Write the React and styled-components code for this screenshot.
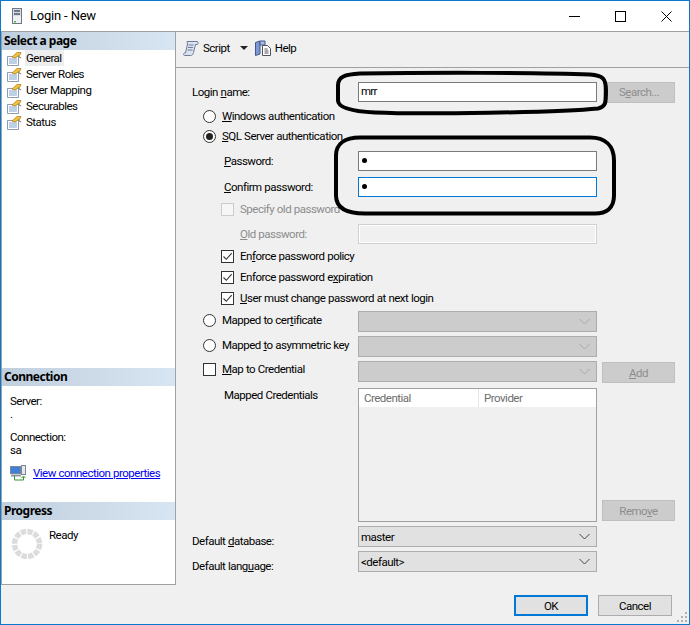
import React from "react";
import styled, { createGlobalStyle } from "styled-components";

const Global = createGlobalStyle`
  html, body { margin: 0; padding: 0; background: #fff; }
  * { box-sizing: border-box; }
`;

const Win = styled.div`
  width: 690px; height: 625px; border: 1px solid #0b78d0; background: #f0f0f0;
  display: flex; flex-direction: column; overflow: hidden;
  font: 11.5px/16px Roboto, "Noto Sans", sans-serif; color: #000;
  letter-spacing: -0.5px; white-space: nowrap;
  word-spacing: 0.3px;
  u { text-underline-offset: 1px; text-decoration-thickness: 1px; }
`;
const TitleBar = styled.header`
  height: 31px; flex: none; background: #fff; display: flex; align-items: center;
  padding-left: 11px; border-bottom: 1px solid #a0a0a0;
`;
const TitleText = styled.span`
  margin-left: 8px; font-size: 13px; letter-spacing: -0.25px; flex: 1;
`;
const WinButton = styled.div`
  width: 46px; height: 30px; display: flex; align-items: center; justify-content: center;
`;
const Body = styled.div`flex: 1; min-height: 0; display: flex;`;
const Sidebar = styled.aside`
  width: 175px; flex: none; background: #fff; display: flex; flex-direction: column;
  border-left: 1px solid #a0a0a0; border-right: 1px solid #a0a0a0; border-bottom: 1px solid #a0a0a0;
`;
const SideHeader = styled.h2`
  margin: 0; height: 18px; padding-left: 2px; font: bold 12px/18px "Noto Sans", sans-serif;
  letter-spacing: -0.5px; word-spacing: 0; background: linear-gradient(90deg, #c0cfde, #d8e5f2);
`;
const PageList = styled.ul`
  list-style: none; margin: 0; padding: 0; height: 318px;
`;
const PageItem = styled.li`
  height: 16px; display: flex; align-items: center; gap: 2px; padding-left: 4px;
`;
const PageName = styled.span`
  padding: 0 2px 0 1px; background: ${p => (p.$active ? "#eeeeee" : "transparent")};
`;
const ConnBlock = styled.div`
  height: 116px; padding: 6px 0 0 8px; display: flex; flex-direction: column;
`;
const ConnLine = styled.div`
  height: 13px; line-height: 13px; margin-top: ${p => p.$top || 0}px;
`;
const LinkRow = styled.div`
  display: flex; align-items: center; gap: 6px; margin-top: 8px;
`;
const Link = styled.a`color: #0000ee; text-decoration: underline; text-underline-offset: 1px;`;
const ProgressBlock = styled.div`
  display: flex; padding: 8px 0 0 9px; gap: 6px; line-height: 14px;
`;
const Main = styled.main`flex: 1; min-width: 0; display: flex; flex-direction: column;`;
const Toolbar = styled.div`
  height: 36px; flex: none; display: flex; align-items: center; padding: 0 0 3px 7px;
  border-bottom: 1px solid #a0a0a0;
`;
const ToolLabel = styled.span`margin-left: ${p => p.$gap}px;`;
const ToolCaret = styled.svg`margin: 0 6px 0 10px;`;
const Form = styled.form`
  position: relative; flex: 1; min-height: 0; padding: 13px 0 0 16px; display: flex; flex-direction: column;
`;
const Row = styled.div`
  display: grid; grid-template-columns: 166px 239px 78px; align-items: ${p => p.$start ? "start" : "center"};
  height: ${p => p.$h || 20}px; margin-top: ${p => p.$mt || 0}px;
`;
const Cell = styled.div`
  display: flex; align-items: center; gap: 6px; padding-left: ${p => p.$indent || 0}px;
  grid-column: ${p => (p.$wide ? "1 / 3" : "auto")};
  color: ${p => (p.$off ? "#8c8c8c" : "#000")};
  padding-top: ${p => p.$pt || 0}px; padding-bottom: ${p => p.$pb || 0}px;
  line-height: ${p => p.$lh || 16}px;
`;
const TextBox = styled.div`
  height: 20px; border: 1px solid ${p => (p.$focus ? "#0078d7" : p.$off ? "#d0d0d0" : "#7a7a7a")};
  background: ${p => (p.$off ? "#f0f0f0" : "#fff")}; padding-left: 2px; line-height: 17px; letter-spacing: -0.8px;
  box-shadow: ${p => (p.$off ? "inset 0 0 0 1px #fff" : "none")};
`;
const Bullet = styled.span`
  display: block; width: 5px; height: 5px; border-radius: 50%; background: #000; margin: 6px 0 0 1px;
`;
const Combo = styled.div`
  height: 21px; border: 1px solid #adadad; background: ${p => (p.$off ? "#cccccc" : "#e1e1e1")};
  display: flex; align-items: center; justify-content: space-between; padding: 0 6px 0 2px;
`;
const ActionButton = styled.div`
  margin-left: ${p => p.$ml || 5}px; margin-top: ${p => p.$mt || 0}px; height: 21px; border: 1px solid #bfbfbf;
  background: #cccccc; color: #8c8c8c;
  display: flex; align-items: center; justify-content: center;
`;
const RadioDot = styled.span`
  width: 13px; height: 13px; flex: none; border-radius: 50%; border: 1px solid #333; background: #fff;
  display: flex; align-items: center; justify-content: center;
  &::after { content: ""; width: 7px; height: 7px; border-radius: 50%; background: ${p => (p.$on ? "#222" : "transparent")}; }
`;
const CheckBoxBox = styled.span`
  width: 13px; height: 13px; flex: none; border: 1px solid ${p => (p.$off ? "#cccccc" : "#333")}; background: ${p => (p.$off ? "#f6f6f6" : "#fff")};
  display: flex; align-items: center; justify-content: center;
`;
const CredTable = styled.div`
  height: 134px; border: 1px solid #a0a0a0; background: #f0f0f0;
`;
const CredHead = styled.div`
  height: 18px; background: #fff; display: grid; grid-template-columns: 119px 1fr; color: #6d6d6d;
`;
const CredCol = styled.div`
  padding-left: 5px; line-height: 18px;
  & + & { border-left: 1px solid #e5e5e5; padding-left: 5px; }
`;
const Overlay = styled.svg`
  position: absolute; left: 0; top: 0; width: 100%; height: 100%; pointer-events: none;
`;
const Footer = styled.footer`
  height: 39px; flex: none; position: relative; display: flex; justify-content: flex-end; gap: 10px;
  padding: 10px 17px 0 0;
`;
const DialogButton = styled.div`
  width: 74px; height: 21px; background: #e1e1e1; border: ${p => (p.$primary ? "2px solid #0078d7" : "1px solid #adadad")};
  display: flex; align-items: center; justify-content: center;
`;
const Grip = styled.svg`position: absolute; right: 1px; bottom: 1px;`;

const Chevron = ({ off }) => (
  <svg width="11" height="7" viewBox="0 0 11 7">
    <path d="M.5 1 5.500 6 10.500 1" fill="none" stroke={off ? "#a8a8a8" : "#444"} />
  </svg>
);
const Tick = () => (
  <svg width="11" height="11" viewBox="0 0 11 11">
    <path d="M1.500 5.500 4.300 8.300 9.700 2.200" fill="none" stroke="#333" strokeWidth="1.100" />
  </svg>
);
const PageIcon = () => (
  <svg width="17" height="15" viewBox="0 0 17 15" style={{ flex: "none" }}>
    <path d="M1.500 5.500h6l2-2h3v11h-11z" fill="#fff" stroke="#8b9cb4" />
    <path d="M3 8h8M3 10h8M3 12h8" stroke="#7fa0d2" />
    <path d="M6 6 11 1.500h4l-1 2.500-5 3z" fill="#f2c23e" stroke="#a97a12" strokeWidth=".7" />
    <path d="M12 5l3 2" stroke="#8c8a70" strokeWidth="1.200" />
  </svg>
);
const ServerIcon = () => (
  <svg width="10" height="16" viewBox="0 0 10 16">
    <rect x=".5" y=".5" width="9" height="15" fill="#d9dce6" stroke="#6f7787" />
    <path d="M2 3h6M2 6h6" stroke="#4d5768" strokeWidth="1.400" />
    <rect x="1" y="8" width="8" height="7" fill="#eef0f4" />
    <rect x="2" y="13" width="2" height="1.500" fill="#58b14a" />
  </svg>
);
const ScrollIcon = () => (
  <svg width="17" height="17" viewBox="0 0 17 17">
    <path d="M4 1.500h10c1.500 0 1.500 2 .5 3h-2l-2 8c-.3 2-1.500 3-3 3h-6c-1 0-1.500-2 0-2.500h1L4.500 4C4.700 3 4 2 4 1.500z" fill="#dde3ee" stroke="#6b7c99" />
    <path d="M5.500 5h5M5 7.500h5M4.500 10h5" stroke="#6b7c99" />
  </svg>
);
const HelpIcon = () => (
  <svg width="18" height="17" viewBox="0 0 18 17">
    <path d="M1.500 2.500 6 1v13l-4.500 1.500z" fill="#7d99d1" stroke="#41598f" />
    <path d="M6 1h5v4H6z" fill="#a9bde3" stroke="#41598f" />
    <path d="M8.500 5.500h5l3 3v7h-8z" fill="#fff" stroke="#4f5661" />
    <path d="M10.500 9h3M10.500 11h4M10.500 13h4" stroke="#555" />
  </svg>
);
const ConnIcon = () => (
  <svg width="17" height="16" viewBox="0 0 17 16" style={{ flex: "none" }}>
    <rect x=".5" y="1.500" width="10" height="7" fill="#3f7fd8" stroke="#7b8797" />
    <path d="M1 10.500h10" stroke="#8d97a6" strokeWidth="2" />
    <rect x="11.500" y=".5" width="4" height="9" fill="#e4e7ec" stroke="#7b8797" />
    <path d="M4.500 11v4h9v-3M11.500 13l2-2 2 2" fill="none" stroke="#2f9a2f" />
  </svg>
);
const Spinner = () => (
  <svg width="32" height="32" viewBox="0 0 32 32" style={{ flex: "none" }}>
    <circle cx="16" cy="16" r="12.500" fill="none" stroke="#dcdcdc" strokeWidth="5.500" strokeDasharray="5.300 1.245" />
  </svg>
);

const Radio = ({ on, label }) => (<><RadioDot $on={on} /><span>{label}</span></>);
const Check = ({ on, off, label }) => (
  <><CheckBoxBox $off={off}>{on && <Tick />}</CheckBoxBox><span>{label}</span></>
);

const pages = ["General", "Server Roles", "User Mapping", "Securables", "Status"];
const policy = [
  <>En<u>f</u>orce password policy</>,
  <>Enforce password e<u>x</u>piration</>,
  <><u>U</u>ser must change password at next login</>,
];

export default function App() {
  return (
    <Win>
      <Global />
      <TitleBar>
        <ServerIcon />
        <TitleText>Login - New</TitleText>
        <WinButton><svg width="11" height="11"><path d="M0 5.500h11" stroke="#000" /></svg></WinButton>
        <WinButton><svg width="11" height="11"><rect x=".5" y=".5" width="10" height="10" fill="none" stroke="#000" /></svg></WinButton>
        <WinButton><svg width="11" height="11"><path d="M.5.5l10 10M10.500.5l-10 10" stroke="#000" /></svg></WinButton>
      </TitleBar>
      <Body>
        <Sidebar>
          <SideHeader>Select a page</SideHeader>
          <PageList>
            {pages.map((p, i) => (
              <PageItem key={p}><PageIcon /><PageName $active={i === 0}>{p}</PageName></PageItem>
            ))}
          </PageList>
          <SideHeader>Connection</SideHeader>
          <ConnBlock>
            <ConnLine $top={3}>Server:</ConnLine>
            <ConnLine>.</ConnLine>
            <ConnLine $top={10}>Connection:</ConnLine>
            <ConnLine>sa</ConnLine>
            <LinkRow><ConnIcon /><Link>View connection properties</Link></LinkRow>
          </ConnBlock>
          <SideHeader>Progress</SideHeader>
          <ProgressBlock><Spinner /><span>Ready</span></ProgressBlock>
        </Sidebar>
        <Main>
          <Toolbar>
            <ScrollIcon />
            <ToolLabel $gap={3}>Script</ToolLabel>
            <ToolCaret width="8" height="4" viewBox="0 0 8 4"><path d="M0 0h8L4 4z" fill="#222" /></ToolCaret>
            <HelpIcon />
            <ToolLabel $gap={3}>Help</ToolLabel>
          </Toolbar>
          <Form>
            <Row $h={22}>
              <Cell><span>Login <u>n</u>ame:</span></Cell>
              <TextBox>mrr</TextBox>
              <ActionButton $ml={6}><span>S<u>e</u>arch...</span></ActionButton>
            </Row>
            <Row $mt={3}><Cell $wide $indent={11}><Radio label={<><u>W</u>indows authentication</>} /></Cell></Row>
            <Row><Cell $wide $indent={11}><Radio on label={<><u>S</u>QL Server authentication</>} /></Cell></Row>
            <Row $mt={5}><Cell $indent={32}><span><u>P</u>assword:</span></Cell><TextBox><Bullet /></TextBox></Row>
            <Row $mt={6}><Cell $indent={32}><span><u>C</u>onfirm password:</span></Cell><TextBox $focus><Bullet /></TextBox></Row>
            <Row $mt={2}><Cell $wide $off $indent={29}><Check off label="Specify old password" /></Cell></Row>
            <Row $mt={5}><Cell $off $indent={48}><span><u>O</u>ld password:</span></Cell><TextBox $off /></Row>
            {policy.map((label, i) => (
              <Row key={i} $mt={i ? 1 : 2}><Cell $wide $indent={29}><Check on label={label} /></Cell></Row>
            ))}
            <Row $h={21} $mt={3}>
              <Cell $indent={11} $pb={3}><Radio label={<>Mapped to cer<u>t</u>ificate</>} /></Cell>
              <Combo $off><span /><Chevron off /></Combo>
            </Row>
            <Row $h={21} $mt={4}>
              <Cell $indent={11} $pb={3}><Radio label={<>Mapped <u>t</u>o asymmetric key</>} /></Cell>
              <Combo $off><span /><Chevron off /></Combo>
            </Row>
            <Row $h={21} $mt={4} $start>
              <Cell $indent={11}><Check label={<><u>M</u>ap to Credential</>} /></Cell>
              <Combo $off><span /><Chevron off /></Combo>
              <ActionButton $mt={1}><span><u>A</u>dd</span></ActionButton>
            </Row>
            <Row $h={134} $mt={6} $start>
              <Cell $indent={32} $lh={14}><span>Mapped Credentials</span></Cell>
              <CredTable>
                <CredHead><CredCol>Credential</CredCol><CredCol>Provider</CredCol></CredHead>
              </CredTable>
              <ActionButton $mt={112}><span>Remo<u>v</u>e</span></ActionButton>
            </Row>
            <Row $h={21} $mt={4} $start>
              <Cell $pt={7}><span>Default <u>d</u>atabase:</span></Cell>
              <Combo><span>master</span><Chevron /></Combo>
            </Row>
            <Row $h={21} $mt={4} $start>
              <Cell $pt={7}><span>Default lang<u>u</u>age:</span></Cell>
              <Combo><span>&lt;default&gt;</span><Chevron /></Combo>
            </Row>
            <Overlay viewBox="176 68 513 516">
              <g fill="none" stroke="#000" strokeWidth="4">
                <path d="M360 73C430 72 540 72 590 74 603 75 606 78 606 90 606 102 606 106 598 108 560 112 420 114 375 112 355 111 338 108 338 100L338 85C338 76 345 74 360 73Z" />
                <path d="M360 137H590C605 137 614 145 614 160V195C614 208 606 213 595 213H365C345 213 336 207 336 195V155C336 143 345 137 360 137Z" />
              </g>
            </Overlay>
          </Form>
        </Main>
      </Body>
      <Footer>
        <DialogButton $primary>OK</DialogButton>
        <DialogButton>Cancel</DialogButton>
        <Grip width="11" height="11" viewBox="0 0 11 11" fill="#b0b0b0">
          <rect x="8" y="0" width="2" height="2" /><rect x="4" y="4" width="2" height="2" /><rect x="8" y="4" width="2" height="2" />
          <rect x="0" y="8" width="2" height="2" /><rect x="4" y="8" width="2" height="2" /><rect x="8" y="8" width="2" height="2" />
        </Grip>
      </Footer>
    </Win>
  );
}
